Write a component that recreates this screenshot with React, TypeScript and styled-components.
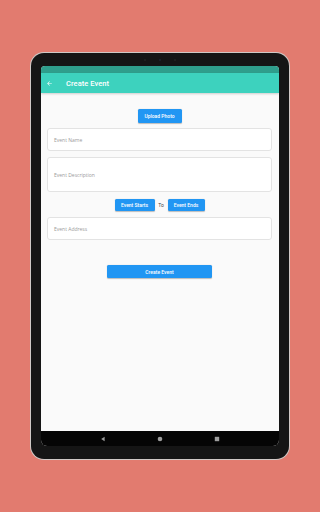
import React from "react";
import styled, { createGlobalStyle } from "styled-components";

const Global = createGlobalStyle`
  html, body { margin: 0; padding: 0; }
  body {
    background: #e27b6f;
    width: 320px;
    height: 512px;
    overflow: hidden;
    font-family: Roboto, "Noto Sans", sans-serif;
  }
`;

const Page = styled.div`
  width: 320px;
  height: 512px;
  box-sizing: border-box;
  padding: 53px 0 0 31px;
`;

const Tablet = styled.div`
  width: 258px;
  height: 406px;
  box-sizing: border-box;
  background: #151515;
  border-radius: 13px;
  box-shadow: 0 0 0 1px #cfc9c6;
  display: flex;
  flex-direction: column;
  padding: 0 10px;
`;

const TopBezel = styled.div`
  height: 13px;
  display: flex;
  align-items: center;
  justify-content: center;
  gap: 13px;
  padding-top: 1px;
  box-sizing: border-box;
`;

const Cam = styled.span<{ $size: number; $color: string }>`
  width: ${(p) => p.$size}px;
  height: ${(p) => p.$size}px;
  border-radius: 50%;
  background: ${(p) => p.$color};
`;

const Screen = styled.div`
  flex: 1;
  display: flex;
  flex-direction: column;
  border-radius: 4px 4px 6px 6px;
  overflow: hidden;
  background: #fafafa;
`;

const StatusBar = styled.div`
  height: 7px;
  background: #2f9e8c;
  flex-shrink: 0;
`;

const AppBar = styled.div`
  height: 20px;
  background: #3dd2be;
  display: flex;
  align-items: center;
  padding-left: 5px;
  gap: 13px;
  flex-shrink: 0;
  box-shadow: 0 1px 2px rgba(0, 0, 0, 0.18);
  position: relative;
  z-index: 1;
`;

const Title = styled.span`
  color: #ffffff;
  font-size: 7.5px;
  font-weight: 500;
  letter-spacing: 0.05px;
`;

const Content = styled.div`
  flex: 1;
  display: flex;
  flex-direction: column;
  align-items: center;
  padding: 16px 7px 0 6px;
`;

const Button = styled.div<{ $w: number; $h: number }>`
  width: ${(p) => p.$w}px;
  height: ${(p) => p.$h}px;
  background: #2196f3;
  color: #fff;
  border-radius: 1.5px;
  font-size: 5px;
  font-weight: 500;
  display: flex;
  align-items: center;
  justify-content: center;
  box-shadow: 0 0.5px 1px rgba(0, 0, 0, 0.25);
  flex-shrink: 0;
  white-space: nowrap;
`;

const Field = styled.div<{ $h: number; $mt: number }>`
  align-self: stretch;
  height: ${(p) => p.$h}px;
  margin-top: ${(p) => p.$mt}px;
  box-sizing: border-box;
  background: #fff;
  border: 1px solid #e3e3e3;
  border-radius: 3px;
  display: flex;
  align-items: center;
  padding-left: 6px;
  color: #9a9a9a;
  font-size: 5px;
  font-family: "Open Sans", Roboto, sans-serif;
`;

const DateRow = styled.div`
  margin-top: 7px;
  display: flex;
  align-items: center;
`;

const ToLabel = styled.span`
  font-size: 5px;
  color: #444;
  width: 13px;
  text-align: center;
`;

const Spacer = styled.div<{ $h: number }>`
  height: ${(p) => p.$h}px;
  flex-shrink: 0;
`;

const NavBar = styled.div`
  height: 15px;
  background: #050505;
  display: flex;
  align-items: center;
  justify-content: center;
  gap: 51px;
  flex-shrink: 0;
`;

const NavIcon = styled.svg`
  width: 6px;
  height: 6px;
  display: block;
`;

const BottomBezel = styled.div`
  height: 13px;
  flex-shrink: 0;
`;

export default function App() {
  return (
    <>
      <Global />
      <Page>
        <Tablet>
          <TopBezel>
            <Cam $size={2} $color="#232323" />
            <Cam $size={2} $color="#1c2430" />
            <Cam $size={2} $color="#232323" />
          </TopBezel>
          <Screen>
            <StatusBar />
            <AppBar>
              <svg width="7" height="7" viewBox="0 0 24 24">
                <path
                  d="M20 11H7.83l5.59-5.59L12 4l-8 8 8 8 1.41-1.41L7.83 13H20v-2z"
                  fill="#ffffff"
                />
              </svg>
              <Title>Create Event</Title>
            </AppBar>
            <Content>
              <Button $w={44} $h={14}>Upload Photo</Button>
              <Field $h={23} $mt={5}>Event Name</Field>
              <Field $h={35} $mt={6}>Event Description</Field>
              <DateRow>
                <Button $w={40} $h={12}>Event Starts</Button>
                <ToLabel>To</ToLabel>
                <Button $w={37} $h={12}>Event Ends</Button>
              </DateRow>
              <Field $h={23} $mt={6}>Event Address</Field>
              <Spacer $h={25} />
              <Button $w={105} $h={13}>Create Event</Button>
            </Content>
            <NavBar>
              <NavIcon viewBox="0 0 6 6">
                <path d="M4.6 0.8 L1.2 3 L4.6 5.2 Z" fill="#9e9e9e" />
              </NavIcon>
              <NavIcon viewBox="0 0 6 6">
                <circle cx="3" cy="3" r="2.3" fill="#9e9e9e" />
              </NavIcon>
              <NavIcon viewBox="0 0 6 6">
                <rect x="0.8" y="0.8" width="4.4" height="4.4" fill="#9e9e9e" />
              </NavIcon>
            </NavBar>
          </Screen>
          <BottomBezel />
        </Tablet>
      </Page>
    </>
  );
}
